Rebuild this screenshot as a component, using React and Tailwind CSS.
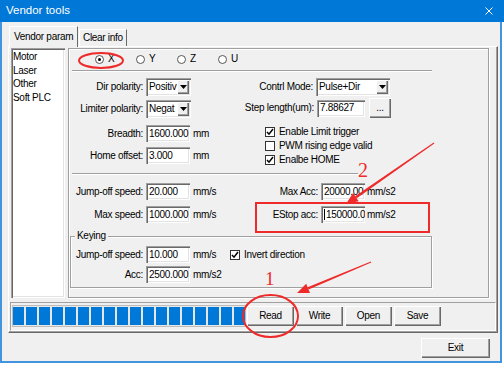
import React from 'react'

const sunken = 'bg-white shadow-[inset_1px_1px_0_#a0a0a0,inset_2px_2px_0_#696969,inset_-1px_-1px_0_#ffffff,inset_-2px_-2px_0_#e3e3e3]'
const raised = 'bg-[#f0f0f0] shadow-[inset_1px_1px_0_#ffffff,inset_-1px_-1px_0_#696969,inset_-2px_-2px_0_#a0a0a0]'

function TextBox({ value, w = 'w-[44px]', caret }) {
  return (
    <div className={`${w} h-[17px] ${sunken} flex items-center pl-[3px] overflow-hidden whitespace-nowrap`}>
      {caret && <span className="w-px h-[11px] bg-black mr-px shrink-0" />}
      {value}
    </div>
  )
}

function Combo({ value, w }) {
  return (
    <div className={`${w} h-[18px] ${sunken} flex items-center p-[2px]`}>
      <span className="flex-1 overflow-hidden whitespace-nowrap pl-px">{value}</span>
      <span className={`w-[12px] h-full ${raised} flex items-center justify-center shrink-0`}>
        <svg width="7" height="4" viewBox="0 0 7 4">
          <path d="M0 0h7L3.5 4z" fill="#000" />
        </svg>
      </span>
    </div>
  )
}

function Label({ w, children }) {
  return <span className={`${w} text-right pr-[3px] whitespace-nowrap shrink-0`}>{children}</span>
}

function Check({ checked, label }) {
  return (
    <div className="flex items-center h-[14px] gap-[4px]">
      <span className="w-[10px] h-[10px] border border-[#333333] bg-white flex items-center justify-center">
        {checked && (
          <svg width="8" height="8" viewBox="0 0 8 8">
            <path d="M1 4l2 2.2L7 1" stroke="#000" strokeWidth="1.5" fill="none" />
          </svg>
        )}
      </span>
      <span>{label}</span>
    </div>
  )
}

function Radio({ checked, label }) {
  return (
    <div className="w-[41px] flex items-center gap-[4px]">
      <span className="w-[9px] h-[9px] rounded-full border border-[#555555] bg-white flex items-center justify-center">
        {checked && <span className="w-[3px] h-[3px] rounded-full bg-black" />}
      </span>
      <span>{label}</span>
    </div>
  )
}

function Button({ children, w = 'w-[47px]' }) {
  return <div className={`${w} h-[20px] ${raised} flex items-center justify-center`}>{children}</div>
}

const blocks = Array.from({ length: 18 })

export default function App() {
  return (
    <div className="relative w-[504px] h-[365px] bg-white overflow-hidden font-['Liberation_Sans',Arial,sans-serif] text-[10px] tracking-[-0.3px] leading-none text-black">
      <div className="w-[504px] flex flex-col">
        {/* title bar */}
        <div className="h-[22px] bg-[#0078d7] flex items-center justify-between pl-[6px] pr-[11px]">
          <span className="text-white text-[11.5px] tracking-normal">Vendor tools</span>
          <svg width="8" height="8" viewBox="0 0 8 8">
            <path d="M0.5 0.5l7 7M7.5 0.5l-7 7" stroke="#fff" strokeWidth="1" />
          </svg>
        </div>

        <div className="w-[502px] h-[341px] bg-[#f0f0f0] border-x-2 border-b-2 border-[#4394de] flex flex-col">
          {/* tabs */}
          <div className="flex items-end gap-px pt-[4px] pl-[7px]">
            <div className="relative z-10 -mb-px w-[69px] h-[21px] bg-[#f0f0f0] border-t border-l border-white border-r border-r-[#696969] flex items-center pl-[4px] pb-px whitespace-nowrap">
              Vendor param
            </div>
            <div className="w-[48px] h-[17px] bg-[#f0f0f0] border-t border-l border-white border-r border-r-[#696969] flex items-center pl-[3px] whitespace-nowrap">
              Clear info
            </div>
          </div>

          {/* tab page */}
          <div className="ml-[6px] w-[490px] h-[287px] border-t border-l border-white border-r border-b border-r-[#696969] border-b-[#696969] shadow-[inset_-1px_-1px_0_#a0a0a0] pt-px pl-[2px] flex flex-col">
            <div className="flex gap-[3px] h-[250px]">
              <div className={`w-[54px] h-[250px] ${sunken} pl-[2px] pt-[2px] leading-[13.5px]`}>
                <div>Motor</div>
                <div>Laser</div>
                <div>Other</div>
                <div>Soft PLC</div>
              </div>

              <div className="w-[421px] h-[250px] border border-[#a0a0a0] shadow-[inset_1px_1px_0_#ffffff,1px_1px_0_#ffffff] pl-[3px] flex flex-col">
                <div className="mt-[3px] h-[14px] flex items-center pl-[23px]">
                  <Radio checked label="X" />
                  <Radio label="Y" />
                  <Radio label="Z" />
                  <Radio label="U" />
                </div>
                <div className="mt-[4px] w-[360px] h-[2px] border-t border-[#a0a0a0] border-b border-b-white" />

                <div className="flex">
                  <div className="w-[170px] flex flex-col">
                    <div className="mt-[6px] flex items-center h-[18px]">
                      <Label w="w-[74px]">Dir polarity:</Label>
                      <Combo w="w-[45px]" value="Positiv" />
                    </div>
                    <div className="mt-[4px] flex items-center h-[18px]">
                      <Label w="w-[74px]">Limiter polarity:</Label>
                      <Combo w="w-[45px]" value="Negat" />
                    </div>
                    <div className="mt-[7px] flex items-center h-[17px]">
                      <Label w="w-[74px]">Breadth:</Label>
                      <TextBox value="1600.000" />
                      <span className="ml-[3px]">mm</span>
                    </div>
                    <div className="mt-[5px] flex items-center h-[17px]">
                      <Label w="w-[74px]">Home offset:</Label>
                      <TextBox value="3.000" />
                      <span className="ml-[3px]">mm</span>
                    </div>
                  </div>
                  <div className="flex flex-col">
                    <div className="mt-[6px] flex items-center h-[18px]">
                      <Label w="w-[74px]">Contrl Mode:</Label>
                      <Combo w="w-[74px]" value="Pulse+Dir" />
                    </div>
                    <div className="mt-[2px] flex items-center h-[20px]">
                      <Label w="w-[75px]">Step length(um):</Label>
                      <TextBox w="w-[48px]" value="7.88627" />
                      <div className="ml-[4px]">
                        <Button w="w-[22px]">...</Button>
                      </div>
                    </div>
                    <div className="mt-[7px] pl-[23px] flex flex-col">
                      <Check checked label="Enable Limit trigger" />
                      <Check label="PWM rising edge valid" />
                      <Check checked label="Enalbe HOME" />
                    </div>
                  </div>
                </div>

                <div className="mt-[6px] w-[286px] h-[2px] border-t border-[#a0a0a0] border-b border-b-white" />

                <div className="flex">
                  <div className="w-[170px] flex flex-col">
                    <div className="mt-[8px] flex items-center h-[17px]">
                      <Label w="w-[74px]">Jump-off speed:</Label>
                      <TextBox value="20.000" />
                      <span className="ml-[3px]">mm/s</span>
                    </div>
                    <div className="mt-[6px] flex items-center h-[17px]">
                      <Label w="w-[74px]">Max speed:</Label>
                      <TextBox value="1000.000" />
                      <span className="ml-[3px]">mm/s</span>
                    </div>
                  </div>
                  <div className="flex flex-col">
                    <div className="mt-[8px] flex items-center h-[17px]">
                      <Label w="w-[79px]">Max Acc:</Label>
                      <TextBox value="20000.00" />
                      <span className="ml-[2px]">mm/s2</span>
                    </div>
                    <div className="mt-[6px] flex items-center h-[17px]">
                      <Label w="w-[79px]">EStop acc:</Label>
                      <TextBox value="150000.0" caret />
                      <span className="ml-[2px]">mm/s2</span>
                    </div>
                  </div>
                </div>

                <fieldset className="mt-[7px] -ml-[2px] w-[362px] border border-[#a0a0a0] shadow-[inset_1px_1px_0_#ffffff,1px_1px_0_#ffffff] pb-[4px]">
                  <legend className="ml-[4px] px-[2px] leading-[12px] bg-[#f0f0f0]">Keying</legend>
                  <div className="mt-[4px] flex items-center h-[17px]">
                    <Label w="w-[75px]">Jump-off speed:</Label>
                    <TextBox value="10.000" />
                    <span className="ml-[3px] w-[37px]">mm/s</span>
                    <Check checked label="Invert direction" />
                  </div>
                  <div className="mt-[3px] flex items-center h-[17px]">
                    <Label w="w-[75px]">Acc:</Label>
                    <TextBox value="2500.000" />
                    <span className="ml-[3px]">mm/s2</span>
                  </div>
                </fieldset>
              </div>
            </div>

            {/* progress + actions */}
            <div className="mt-[4px] -ml-px w-[486px] h-[29px] border-t border-l border-[#a0a0a0] border-b border-r border-b-white border-r-white flex items-start pt-[2px] pl-px">
              <div className="w-[234px] h-[22px] border border-[#bcbcbc] bg-[#e6e6e6] flex gap-[2px] py-px overflow-hidden">
                {blocks.map((_, i) => (
                  <div key={i} className="w-[11px] h-full bg-[#0078d7] shrink-0" />
                ))}
              </div>
              <div className="ml-px mt-px flex gap-[2px]">
                <Button>Read</Button>
                <Button>Write</Button>
                <Button>Open</Button>
                <Button>Save</Button>
              </div>
            </div>
          </div>

          <div className="mt-[5px] flex justify-end pr-[10px]">
            <Button w="w-[69px]">Exit</Button>
          </div>
        </div>
      </div>

      {/* annotations */}
      <svg className="absolute left-0 top-0 pointer-events-none" width="504" height="365" viewBox="0 0 504 365">
        <ellipse cx="101" cy="60.5" rx="22" ry="7.5" fill="none" stroke="#ee2a2a" strokeWidth="2" />
        <ellipse cx="270.5" cy="316" rx="27.5" ry="21" fill="none" stroke="#ee2a2a" strokeWidth="2" />
        <rect x="256" y="203" width="173" height="29" fill="none" stroke="#ee2a2a" strokeWidth="2" />
        <polygon points="371.2,262.5 370.8,261.5 307.6,287.3 308.6,289.5" fill="#ee2a2a" />
        <polygon points="297,293 310,293 306.2,283.8" fill="#ee2a2a" />
        <polygon points="434.3,143.4 433.7,142.6 355,196.2 356.8,198.2" fill="#ee2a2a" />
        <polygon points="346,204 358.7,201.3 353.1,193.1" fill="#ee2a2a" />
      </svg>
      <span className="absolute left-[265px] top-[269px] font-['Liberation_Serif',serif] text-[19px] tracking-normal leading-none text-[#ee2a2a]">1</span>
      <span className="absolute left-[358px] top-[160px] font-['Liberation_Serif',serif] text-[20px] tracking-normal leading-none text-[#ee2a2a]">2</span>
    </div>
  )
}
